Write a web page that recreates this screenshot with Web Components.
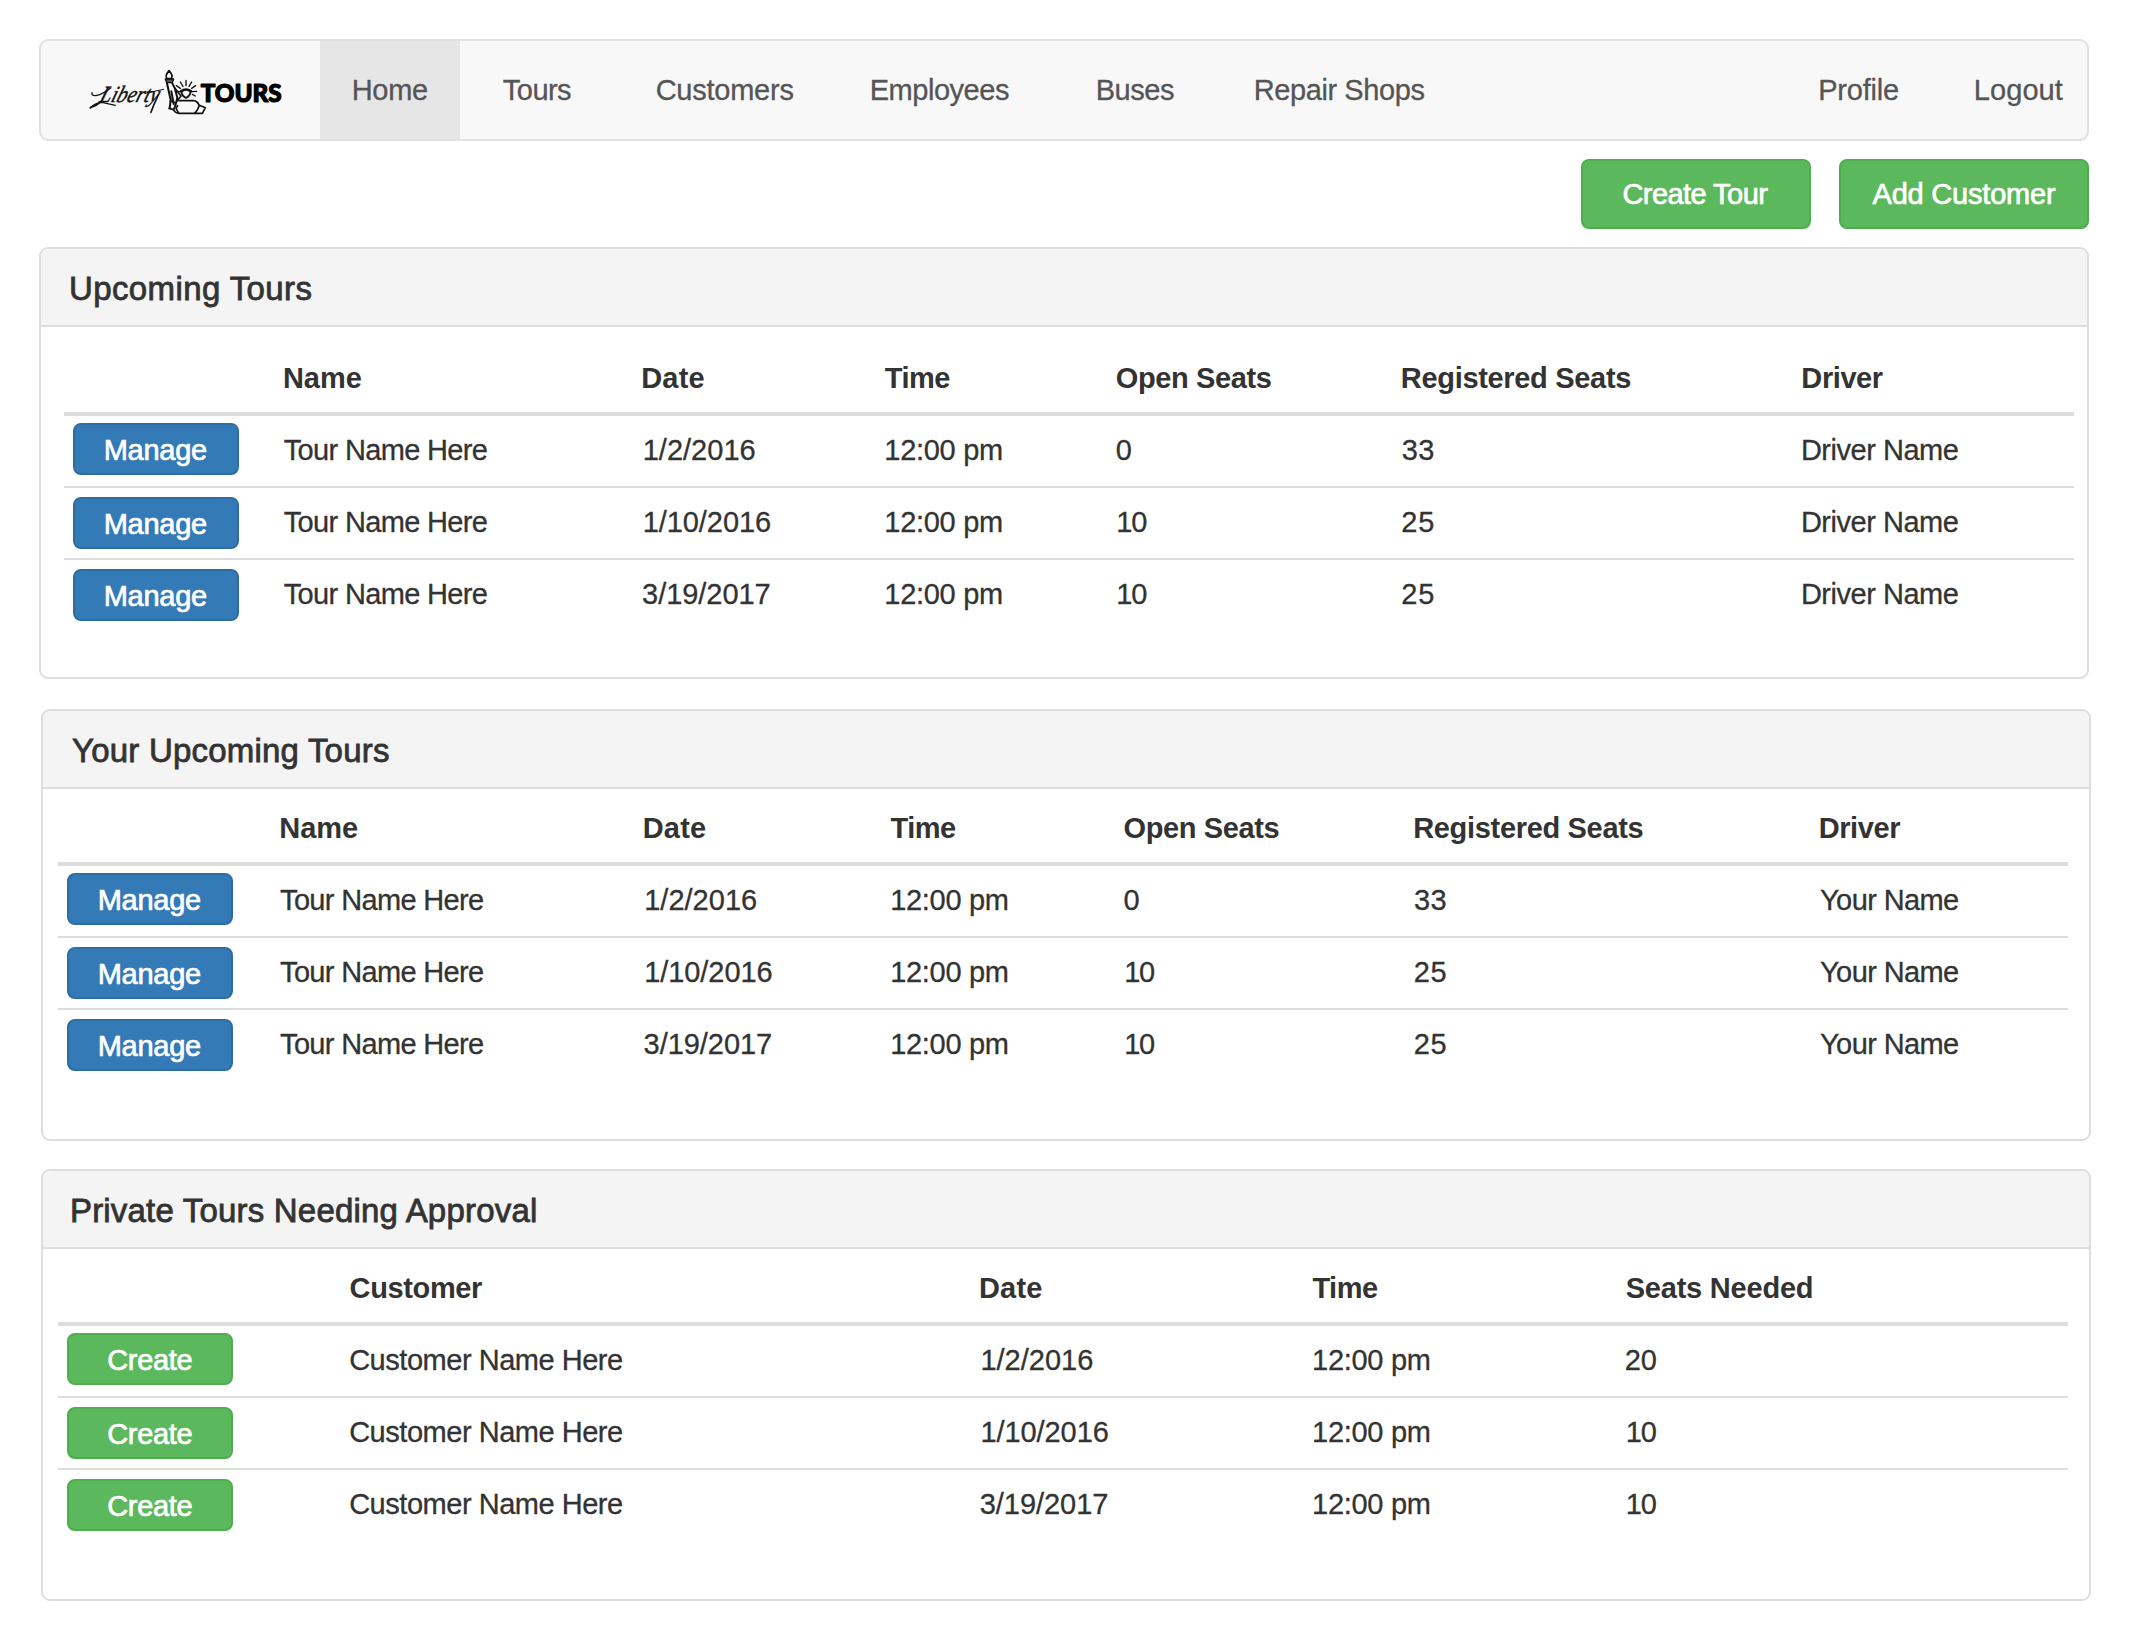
<!DOCTYPE html>
<html lang="en">
<head>
<meta charset="utf-8">
<title>Liberty Tours</title>
<style>
html,body{margin:0;background:#fff}
body{font-family:"Liberation Sans",Arial,sans-serif;color:#333;width:2130px;height:1640px;overflow:hidden;-webkit-text-stroke:.3px currentColor}
</style>
</head>
<body>
<tours-app></tours-app>
<script>
const ctx = document.createElement('canvas').getContext('2d');

// A single line of text whose box is its inked width; tracking is adjusted to fill that width.
class FitLabel extends HTMLElement {
  connectedCallback() {
    const root = this.attachShadow({mode: 'open'});
    const size = parseFloat(this.getAttribute('size') || '29');
    const weight = this.getAttribute('weight') || '400';
    const ink = parseFloat(this.getAttribute('ink'));
    const text = this.getAttribute('text');
    // Measured at a large size so that the bounds are not rounded to whole pixels.
    ctx.font = `${weight} ${size * 20}px "Liberation Sans"`;
    const m = ctx.measureText(text);
    const left = m.actualBoundingBoxLeft / 20;
    const natural = left + m.actualBoundingBoxRight / 20;
    const ls = text.length > 1 ? (ink - natural) / (text.length - 1) : 0;
    root.innerHTML = `<style>
      :host{display:block;flex:none;white-space:pre;font-size:${size}px;font-weight:${weight};line-height:40px;width:${ink}px}
      span{display:block;width:max-content;margin-left:${left}px;letter-spacing:${ls.toFixed(3)}px}
    </style><span>${text}</span>`;
  }
}
customElements.define('fit-label', FitLabel);

class BrandLogo extends HTMLElement {
  connectedCallback() {
    this.attachShadow({mode: 'open'}).innerHTML = `<style>:host{display:block;width:210px;height:64px}svg{display:block;-webkit-text-stroke:0}</style>
    <svg width="210" height="64" viewBox="0 0 630 192" fill="none" stroke="#111" stroke-linecap="round" stroke-linejoin="round">
      <text x="0" y="0" transform="translate(56 126) skewX(-18)" fill="#111" stroke="#111" stroke-width="1.2" font-family="Liberation Serif" font-style="italic" font-size="70" textLength="176" lengthAdjust="spacingAndGlyphs">Liberty</text>
      <path d="M36 98 Q33 108 48 107 Q70 102 92 84" stroke-width="4"/>
      <path d="M31 144 Q44 129 66 127 Q86 132 106 136" stroke-width="3.5"/>
      <path d="M31 143 Q50 137 64 124" stroke-width="5"/>
      <path d="M196 100 Q222 94 251 88" stroke-width="3"/>
      <path d="M236 103 Q222 130 213 157" stroke-width="5"/>
      <path d="M267 32 C260 40 256 50 261 56 H274 C279 48 274 39 267 32Z" stroke-width="5"/>
      <path d="M256 57 H281 L277 68 H260Z" fill="#555" stroke-width="4"/>
      <path d="M261 70 L272 120 L269 145 M277 70 L285 86 L292 113 L286 137 M274 94 L281 132" stroke-width="6"/>
      <path d="M286 86 L303 108 L292 122 M267 145 L281 149 L286 137 M271 123 L283 127" stroke-width="5"/>
      <path d="M305 94 V99 Q307 109 318 114 Q329 109 331 99 V94" stroke-width="5"/>
      <path d="M303 94 Q318 83 333 94" stroke-width="8"/>
      <path d="M318 77 V61 M309 79 L301 66 M327 79 L335 66 M301 85 L289 77 M335 85 L347 77 M299 95 L286 94 M337 95 L350 94 M337 103 L346 108" stroke-width="4"/>
      <path d="M297 122 H340 Q353 123 357 136 M281 150 Q286 160 297 160 H344 M293 137 L288 145 L295 158" stroke-width="5"/>
      <path d="M358 136 L376 143 L367 160 H344 L352 150Z" stroke-width="5"/>
      <text x="362" y="127" fill="#000" stroke="#000" stroke-width="3.5" font-family="Lato" font-weight="900" font-size="74" textLength="243" lengthAdjust="spacingAndGlyphs">TOURS</text>
    </svg>`;
  }
}
customElements.define('brand-logo', BrandLogo);

class NavBar extends HTMLElement {
  connectedCallback() {
    const links = [['Tours',67.4,43.3],['Customers',136,86.3],['Employees',136.5,79],['Buses',75.5,89.5],['Repair Shops',168,82.5]];
    this.attachShadow({mode: 'open'}).innerHTML = `<style>
      :host{display:block}
      nav{display:flex;align-items:stretch;box-sizing:border-box;width:2050px;height:102px;border:2px solid #e1e1e1;border-radius:9px;background:#f8f8f8;color:#555}
      brand-logo{margin:19px 30px 0 39px}
      .active{width:140px;background:#e6e6e6;display:flex;align-items:center;box-sizing:border-box;padding-left:34px}
      .links,.user{display:flex;align-items:center}
      .user{margin-left:auto;gap:78px;padding-right:24px}
    </style><nav><brand-logo></brand-logo>
      <div class="active"><fit-label text="Home" ink="73"></fit-label></div>
      <div class="links">${links.map(l => `<fit-label text="${l[0]}" ink="${l[1]}" style="margin-left:${l[2]}px"></fit-label>`).join('')}</div>
      <div class="user"><fit-label text="Profile" ink="77.5"></fit-label><fit-label text="Logout" ink="87"></fit-label></div>
    </nav>`;
  }
}
customElements.define('nav-bar', NavBar);

class UiButton extends HTMLElement {
  connectedCallback() {
    const green = this.getAttribute('kind') === 'success';
    const w = this.getAttribute('width'), h = this.getAttribute('height');
    this.attachShadow({mode: 'open'}).innerHTML = `<style>
      :host{display:block;flex:none}
      button{all:unset;box-sizing:border-box;display:flex;align-items:center;justify-content:center;width:${w}px;height:${h}px;
        padding-top:${h < 60 ? 2 : 0}px;border-radius:8px;border:2px solid ${green ? '#4cae4c' : '#2e6da4'};background:${green ? '#5cb85c' : '#337ab7'};
        color:#fff;-webkit-text-stroke:.7px #fff}
    </style><button><fit-label text="${this.getAttribute('text')}" ink="${this.getAttribute('ink')}"></fit-label></button>`;
  }
}
customElements.define('ui-button', UiButton);

class UiPanel extends HTMLElement {
  connectedCallback() {
    this.attachShadow({mode: 'open'}).innerHTML = `<style>
      :host{display:flex;flex-direction:column;box-sizing:border-box;width:2050px;height:432px;border:2px solid #ddd;border-radius:9px;overflow:hidden;background:#fff}
      header{box-sizing:border-box;height:78px;flex:none;display:flex;align-items:center;padding:3px 0 0 var(--title-x,30px);background:#f4f4f4;border-bottom:2px solid #ddd;-webkit-text-stroke:.8px #333}
    </style><header><fit-label text="${this.getAttribute('heading')}" ink="${this.getAttribute('ink')}" size="33"></fit-label></header><slot></slot>`;
  }
}
customElements.define('ui-panel', UiPanel);

const HEAD = {Name:76.5, Date:61, Time:65, 'Open Seats':154, 'Registered Seats':227.5, Driver:79.5, Customer:131.5, 'Seats Needed':185.5};
const CELL = {'Tour Name Here':202.5, 'Customer Name Here':271.5, '1/2/2016':110, '1/10/2016':125.5, '3/19/2017':126.5, '12:00 pm':115.5, '0':14, '10':28.5, '20':30, '25':30.5, '33':30.5, 'Driver Name':154.5, 'Your Name':137.5};

class DataTable extends HTMLElement {
  connectedCallback() {
    const d = TABLES[this.getAttribute('source')];
    const first = d.starts[0];
    const cols = d.starts.map((s, i) => i < d.starts.length - 1 ? (d.starts[i + 1] - s) + 'px' : '1fr').join(' ');
    const cell = (t, head) => {
      const pad = !head && t[0] === '1' ? 1.5 : (!head && t[0] === 'T' ? -.5 : 0);
      return `<div role="${head ? 'columnheader' : 'cell'}"><fit-label style="margin-left:${pad}px" text="${t}" ${head ? 'weight="700"' : ''} ink="${(head ? HEAD : CELL)[t]}"></fit-label></div>`;
    };
    this.attachShadow({mode: 'open'}).innerHTML = `<style>
      :host{display:block;width:2010px;flex:none}
      .row{display:grid;grid-template-columns:${first}px ${cols};height:70px;padding-bottom:2px;box-sizing:border-box;align-items:center}
      .head{height:72px;padding-bottom:0;border-bottom:4px solid #ddd;-webkit-text-stroke:0}
      .row.line{height:72px;border-bottom:2px solid #ddd}
      .act{align-self:start;padding:9px 0 0 9px}
      .head + .row .act{padding-top:7px}
    </style><div role="table"><div class="row head" role="row"><div></div>${d.head.map(t => cell(t, true)).join('')}</div>
    ${d.rows.map((r, i) => `<div role="row" class="row ${i < d.rows.length - 1 ? 'line' : ''}"><div class="act">${d.button}</div>${r.map(t => cell(t, false)).join('')}</div>`).join('')}</div>`;
  }
}
const manage = '<ui-button text="Manage" ink="100" width="166" height="52"></ui-button>';
const create = '<ui-button text="Create" ink="83" width="166" height="52" kind="success"></ui-button>';
const tourHead = ['Name','Date','Time','Open Seats','Registered Seats','Driver'];
const tourRows = who => [['Tour Name Here','1/2/2016','12:00 pm','0','33',who],['Tour Name Here','1/10/2016','12:00 pm','10','25',who],['Tour Name Here','3/19/2017','12:00 pm','10','25',who]];
const TABLES = {
  all: {head: tourHead, rows: tourRows('Driver Name'), button: manage, starts: [220.7,579,820.7,1052.7,1338.7,1739.2]},
  mine: {head: tourHead, rows: tourRows('Your Name'), button: manage, starts: [223,586.5,832.5,1066.5,1357,1762.5]},
  approval: {head: ['Customer','Date','Time','Seats Needed'], button: create, starts: [292.5,922.7,1254.4,1568.2],
    rows: [['Customer Name Here','1/2/2016','12:00 pm','20'],['Customer Name Here','1/10/2016','12:00 pm','10'],['Customer Name Here','3/19/2017','12:00 pm','10']]}
};
customElements.define('data-table', DataTable);

class ToursApp extends HTMLElement {
  connectedCallback() {
    this.attachShadow({mode: 'open'}).innerHTML = `<style>
      :host{display:block;padding:39px 0 0 39px}
      .actions{display:flex;justify-content:flex-end;gap:28px;width:2050px;padding:18px 0}
      .first data-table{margin:17px 0 0 23px}
      .second,.third{margin-left:2px;--title-x:29.5px}
      .second{margin-top:30px}
      .third{margin-top:28px}
      .second data-table,.third data-table{margin:5px 0 0 15px}
    </style>
    <nav-bar></nav-bar>
    <div class="actions">
      <ui-button kind="success" text="Create Tour" ink="144.5" width="230" height="70"></ui-button>
      <ui-button kind="success" text="Add Customer" ink="183" width="250" height="70"></ui-button>
    </div>
    <ui-panel class="first" heading="Upcoming Tours" ink="240.5"><data-table source="all"></data-table></ui-panel>
    <ui-panel class="second" heading="Your Upcoming Tours" ink="316.5"><data-table source="mine"></data-table></ui-panel>
    <ui-panel class="third" heading="Private Tours Needing Approval" ink="465"><data-table source="approval"></data-table></ui-panel>`;
  }
}
customElements.define('tours-app', ToursApp);
</script>
</body>
</html>
